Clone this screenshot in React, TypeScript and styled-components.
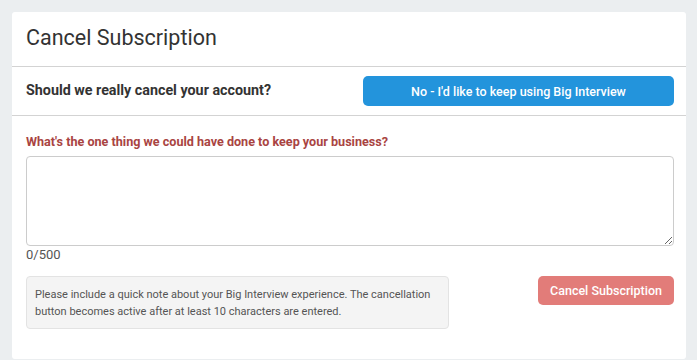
import React from "react";
import styled, { createGlobalStyle } from "styled-components";

const GlobalStyle = createGlobalStyle`
  html, body {
    margin: 0;
    padding: 0;
    background: #ebeef0;
    font-family: Roboto, "Liberation Sans", sans-serif;
  }
`;

const Page = styled.div`
  padding: 12px 11px 0 12px;
  height: 360px;
  box-sizing: border-box;
  overflow: hidden;
`;

const Card = styled.div`
  background: #fff;
  border-radius: 3px;
  height: 347px;
`;

const Header = styled.div`
  height: 54px;
  display: flex;
  align-items: center;
  padding: 0 14px;
  border-bottom: 1px solid #d3d3d3;
`;

const Title = styled.h1`
  margin: 0 0 4px;
  font-size: 21.5px;
  font-weight: 400;
  color: #333;
`;

const QuestionRow = styled.div`
  height: 48px;
  display: flex;
  align-items: center;
  justify-content: space-between;
  padding: 0 12px 0 14px;
  border-bottom: 1px solid #d3d3d3;
`;

const Question = styled.div`
  font-size: 14.3px;
  font-weight: 700;
  color: #333;
  margin-top: -3px;
`;

const Button = styled.button<{ tone: "blue" | "red"; w: number; h: number }>`
  width: ${({ w }) => w}px;
  height: ${({ h }) => h}px;
  border: none;
  border-radius: 5px;
  background: ${({ tone }) => (tone === "blue" ? "#2394dc" : "#e27c79")};
  color: #fff;
  font-family: Roboto, "Liberation Sans", sans-serif;
  font-weight: 500;
  font-size: 12.5px;
  cursor: pointer;
  padding: 0;
`;

const Body = styled.div`
  padding: 18px 12px 0 14px;
`;

const Label = styled.div`
  font-size: 12.6px;
  font-weight: 700;
  color: #a94442;
  margin-bottom: 7px;
`;

const TextArea = styled.textarea`
  display: block;
  width: 100%;
  height: 90px;
  box-sizing: border-box;
  border: 1px solid #ccc;
  border-radius: 4px;
  resize: vertical;
  font-family: inherit;
`;

const Counter = styled.div`
  font-size: 13px;
  color: #555;
  margin-top: 1px;
`;

const Footer = styled.div`
  display: flex;
  justify-content: space-between;
  align-items: flex-start;
  margin-top: 14px;
`;

const Note = styled.div`
  width: 423px;
  box-sizing: border-box;
  background: #f4f4f4;
  border: 1px solid #e3e3e3;
  border-radius: 4px;
  padding: 9px 8px 8px;
  font-size: 11px;
  line-height: 17px;
  color: #555;
`;

export default function App() {
  return (
    <>
      <GlobalStyle />
      <Page>
        <Card>
          <Header>
            <Title>Cancel Subscription</Title>
          </Header>
          <QuestionRow>
            <Question>Should we really cancel your account?</Question>
            <Button tone="blue" w={311} h={30}>
              No - I'd like to keep using Big Interview
            </Button>
          </QuestionRow>
          <Body>
            <Label>What's the one thing we could have done to keep your business?</Label>
            <TextArea />
            <Counter>0/500</Counter>
            <Footer>
              <Note>
                Please include a quick note about your Big Interview experience. The cancellation
                button becomes active after at least 10 characters are entered.
              </Note>
              <Button tone="red" w={136} h={29}>
                Cancel Subscription
              </Button>
            </Footer>
          </Body>
        </Card>
      </Page>
    </>
  );
}
